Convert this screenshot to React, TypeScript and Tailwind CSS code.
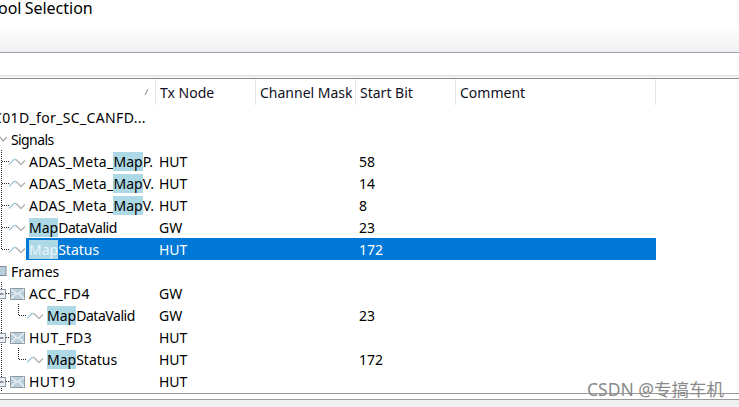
const font = "[font-family:'Noto_Sans','Noto_Sans_CJK_SC',sans-serif]";

const Wave = () => (
  <svg width="17" height="10" viewBox="0 0 17 10" className="shrink-0" fill="none">
    <path d="M0 7.5 L2 5.5 L5 2.5 L7 2.5" stroke="#a9cbdc" strokeWidth="1.5" />
    <path d="M7 2.5 L9 4.5 L12 7.5 L14 5.5 L16 3.5" stroke="#b4b4b4" strokeWidth="1.5" />
  </svg>
);

const Envelope = () => (
  <svg width="15" height="12" viewBox="0 0 15 12" className="shrink-0">
    <rect x="0.5" y="0.5" width="14" height="11" fill="#b9cedb" stroke="#8f99a1" />
    <path d="M1 1 L7.5 6.5 L14 1 M1 11 L6 5.5 M14 11 L9 5.5" fill="none" stroke="#eef3f6" strokeWidth="1.2" />
  </svg>
);

// dotted tree lines at the left of a row
const Dots = ({ kind }: { kind: "mid" | "last" | "box" | "childL" }) => (
  <svg width="30" height="22" viewBox="0 0 30 22" className="absolute left-0 top-0">
    <g stroke="#222" strokeDasharray="1 1" fill="none">
      {(kind === "mid" || kind === "childL" || kind === "box") && <path d="M1.5 0 V22" />}
      {kind === "last" && <path d="M1.5 0 V11" />}
      {kind === "mid" || kind === "last" ? <path d="M2 11.5 H9" /> : null}
      {kind === "childL" && <path d="M18.5 0 V11.5 H26" />}
      {kind === "box" && <path d="M6 11.5 H10" />}
    </g>
    {kind === "box" && (
      <g>
        <rect x="-3.5" y="7.5" width="9" height="9" fill="#eef0f4" stroke="#8f9aa8" />
        <path d="M-1 12 H3.5" stroke="#2a3a55" />
      </g>
    )}
  </svg>
);

const Name = ({ text, selected }: { text: string; selected?: boolean }) => {
  const rest = text.split("Map");
  return (
    <span className="whitespace-nowrap">
      <span className="tracking-[0.3px]">{rest[0]}</span>
      <span className={selected ? "bg-[#add8e6] text-[#e8f4fa]" : "bg-[#add8e6]"}>Map</span>
      <span className={rest[1] === "DataValid" ? "tracking-[-0.45px]" : ""}>{rest[1]}</span>
    </span>
  );
};

type Row = {
  name: string;
  tx?: string;
  bit?: string;
  kind?: "mid" | "last" | "box" | "childL";
  icon?: "wave" | "env";
  indent: string;
  hit?: boolean;
  selected?: boolean;
};

const rows: Row[] = [
  { name: "C01D_for_SC_CANFD...", indent: "-ml-[7px]" },
  { name: "Signals", indent: "pl-[11px] tracking-[-0.6px]" },
  { name: "ADAS_Meta_MapP.", tx: "HUT", bit: "58", kind: "mid", icon: "wave", indent: "pl-[9px]", hit: true },
  { name: "ADAS_Meta_MapV.", tx: "HUT", bit: "14", kind: "mid", icon: "wave", indent: "pl-[9px]", hit: true },
  { name: "ADAS_Meta_MapV.", tx: "HUT", bit: "8", kind: "mid", icon: "wave", indent: "pl-[9px]", hit: true },
  { name: "MapDataValid", tx: "GW", bit: "23", kind: "mid", icon: "wave", indent: "pl-[9px]", hit: true },
  { name: "MapStatus", tx: "HUT", bit: "172", kind: "last", icon: "wave", indent: "pl-[9px]", hit: true, selected: true },
  { name: "Frames", indent: "pl-[11px]" },
  { name: "ACC_FD4", tx: "GW", kind: "box", icon: "env", indent: "pl-[10px] tracking-[0.45px]" },
  { name: "MapDataValid", tx: "GW", bit: "23", kind: "childL", icon: "wave", indent: "pl-[27px]", hit: true },
  { name: "HUT_FD3", tx: "HUT", kind: "box", icon: "env", indent: "pl-[10px] tracking-[0.45px]" },
  { name: "MapStatus", tx: "HUT", bit: "172", kind: "childL", icon: "wave", indent: "pl-[27px]", hit: true },
  { name: "HUT19", tx: "HUT", kind: "box", icon: "env", indent: "pl-[10px] tracking-[0.45px]" },
];

const TreeRow = ({ r }: { r: Row }) => (
  <div className={`relative flex h-[22px] w-[656px] items-center ${r.selected ? "text-white" : "text-black"}`}>
    {r.selected && <div className="absolute top-0 right-0 bottom-0 left-[26px] bg-[#0078d7]" />}
    {r.kind && <Dots kind={r.kind} />}
    {r.name === "Signals" && (
      <svg width="8" height="22" viewBox="0 0 8 22" className="absolute left-0 top-0" fill="none">
        <path d="M0 9 L3 13 L7 9" stroke="#a8a8a8" strokeWidth="1.3" />
      </svg>
    )}
    {r.name === "Frames" && (
      <svg width="7" height="22" viewBox="0 0 7 22" className="absolute left-0 top-0">
        <rect x="-7" y="6.5" width="13" height="9" fill="#b9cedb" stroke="#808a90" />
      </svg>
    )}
    <div className={`relative flex h-full w-[155px] shrink-0 items-center overflow-hidden pt-[2px] ${r.indent}`}>
      {r.icon === "wave" && <Wave />}
      {r.icon === "env" && <Envelope />}
      <div
        className={`flex h-full items-center ${r.icon === "wave" ? "ml-[3px]" : ""} ${r.icon === "env" ? "ml-[4px]" : ""} ${r.name.startsWith("C01D") ? "tracking-[0.35px]" : ""}`}
      >
        {r.hit ? <Name text={r.name} selected={r.selected} /> : <span className="whitespace-nowrap">{r.name}</span>}
      </div>
    </div>
    <div className={`relative flex h-full w-[500px] items-center pt-[2px] ${r.name.startsWith("C01D") ? "ml-[7px]" : ""}`}>
      <div className="w-[200px] pl-1">{r.tx}</div>
      <div className="pl-1">{r.bit}</div>
    </div>
  </div>
);

const Head = ({ label, width, children }: { label: string; width: string; children?: React.ReactNode }) => (
  <div className={`relative flex h-full shrink-0 items-center border-r border-[#e5e5e5] pt-[2px] pl-[4px] ${width}`}>
    {label}
    {children}
  </div>
);

export default function App() {
  return (
    <div className={`relative flex h-[407px] w-[739px] flex-col overflow-hidden bg-white text-[14px] leading-none text-black ${font}`}>
      <div className="flex h-[26px] shrink-0 items-center pb-[10px] text-[16px]">
        <span className="-ml-[2px] [word-spacing:-1px]">ool Selection</span>
      </div>
      <div className="h-[27px] shrink-0 border-b border-[#a0a0b0] bg-gradient-to-b from-white to-[#f0f0f0]" />
      <div className="h-[22px] shrink-0" />
      <div className="h-[4px] shrink-0 border-t border-b border-t-[#dcdcdc] border-b-[#8e8e8e] bg-[#f4f4f4]" />
      <div className="flex h-[26px] shrink-0 items-center text-[#10101e]">
        <Head label="" width="w-[156px]">
          <svg width="5" height="8" viewBox="0 0 5 8" className="absolute right-[6px] top-[9px]" fill="none">
            <path d="M1 7 L4 1" stroke="#a0a0a0" strokeWidth="1.2" />
          </svg>
        </Head>
        <Head label="Tx Node" width="w-[100px]" />
        <Head label="Channel Mask" width="w-[100px]" />
        <Head label="Start Bit" width="w-[100px]" />
        <Head label="Comment" width="w-[200px]" />
      </div>
      <div className="flex-1 overflow-hidden pt-px">
        {rows.map((r, i) => (
          <TreeRow key={i} r={r} />
        ))}
      </div>
      <div className="h-[7px] shrink-0 border-y border-[#9a9a9a] bg-white" />
      <div className="h-[7px] shrink-0 bg-[#f0f0f0]" />
      <div className="absolute left-[587px] top-[380px] pt-px text-[17.5px] whitespace-nowrap text-[#8a8a8a]">CSDN @专搞车机</div>
    </div>
  );
}
